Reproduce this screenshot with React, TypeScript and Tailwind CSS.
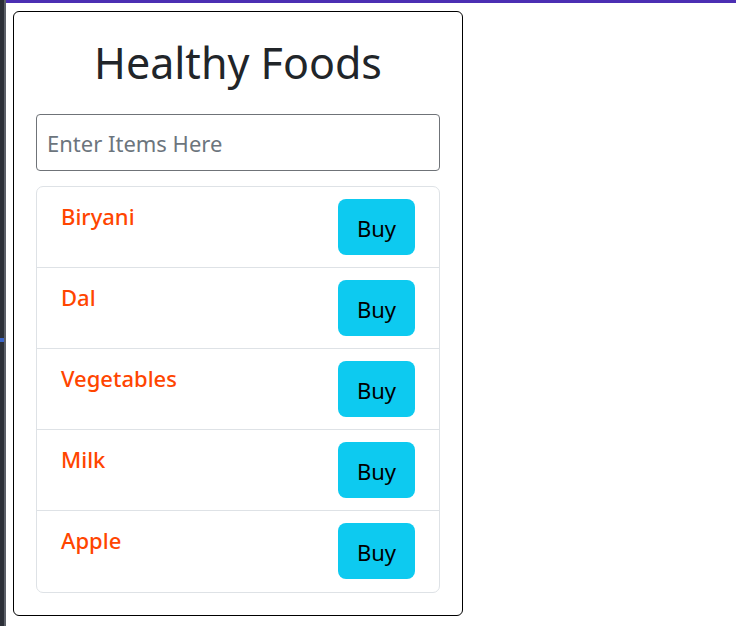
import React from "react";

const items = ["Biryani", "Dal", "Vegetables", "Milk", "Apple"];

export default function App() {
  return (
    <div className="relative w-[736px] h-[626px] bg-white overflow-hidden" style={{ fontFamily: '"Noto Sans", "Open Sans", sans-serif' }}>
      <div className="absolute left-0 top-0 h-[626px] w-[4px] bg-[#2c3038]" />
      <div className="absolute left-[4px] top-0 h-[626px] w-[2px] bg-[#5c6068]" />
      <div className="absolute left-0 top-[338px] h-[4px] w-[4px] bg-[#3a64c8]" />
      <div className="absolute left-[6px] top-0 h-[3px] w-[730px] bg-[#4b2fb3]" />
      <div className="pl-[13px] pt-[11px]">
        <div className="w-[450px] h-[605px] border border-black rounded-[6px] px-[22px] flex flex-col">
          <div className="h-[102px] flex items-center justify-center">
            <h1 className="text-[43px] leading-none text-[#212529] pb-[2px]">Healthy Foods</h1>
          </div>
          <input
            className="w-full h-[57px] border border-[#6f7378] rounded-[4px] px-[10px] text-[22px] text-[#212529] placeholder:text-[#6c757d] outline-none"
            placeholder="Enter Items Here"
          />
          <div className="mt-[15px] border border-[#dee2e6] rounded-[7px] flex flex-col">
            {items.map((it, i) => (
              <div
                key={it}
                className={`h-[81px] flex justify-between items-start pl-[24px] pr-[24px] pt-[12px] ${i < items.length - 1 ? "border-b border-[#dee2e6]" : ""}`}
              >
                <span className="text-[22px] font-medium text-[#ff4500] leading-[30px] mt-[2px]">{it}</span>
                <button className="w-[77px] h-[56px] rounded-[8px] bg-[#0dcaf0] text-[22px] text-black flex items-center justify-center pt-[2px]">
                  Buy
                </button>
              </div>
            ))}
          </div>
        </div>
      </div>
    </div>
  );
}
